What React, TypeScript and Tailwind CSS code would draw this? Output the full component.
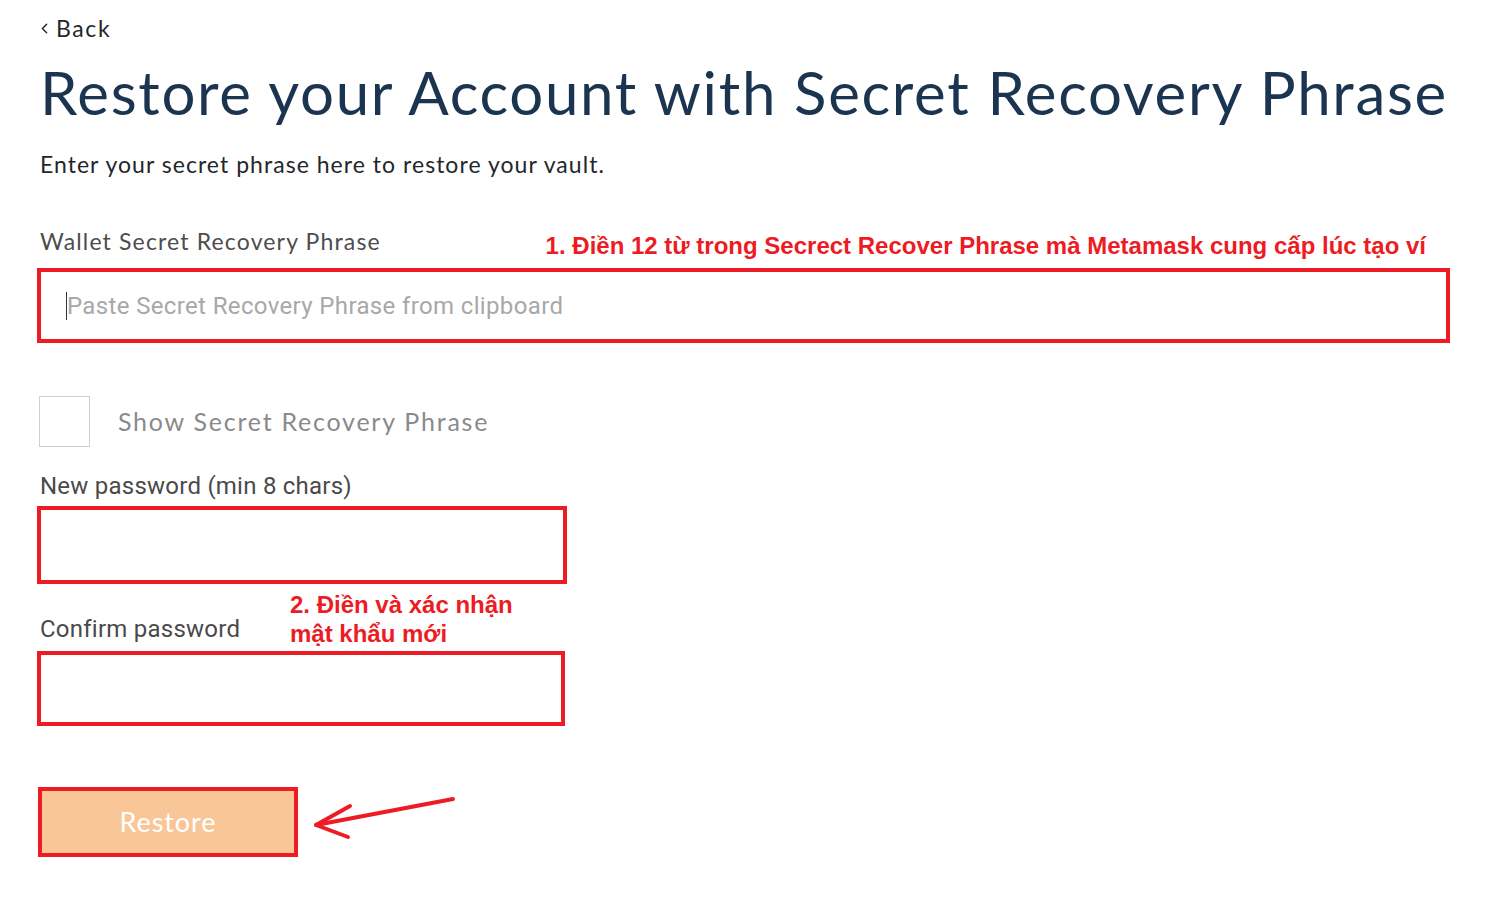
import { ChevronLeft } from 'lucide-react'

const euclid = { fontFamily: 'Lato, "Noto Sans", sans-serif' }

function RedArrow() {
  return (
    <svg width="170" height="60" viewBox="0 0 170 60">
      <g stroke="#ed1c24" strokeWidth="4" strokeLinecap="round" strokeLinejoin="round" fill="none">
        <line x1="155" y1="12" x2="18" y2="38" />
        <polyline points="52,19 18,38 50,50" />
      </g>
    </svg>
  )
}

export default function App() {
  return (
    <div className="min-h-[900px] w-[1507px] bg-white px-10 pt-[14px] text-[#24272a]" style={euclid}>
      {/* Back */}
      <div className="flex items-center gap-[3px] font-['Lato'] text-[23px] leading-[28px] tracking-[0.07em] text-[#24272a]">
        <ChevronLeft size={17} strokeWidth={2} className="-ml-[4px]" />
        <span>Back</span>
      </div>

      {/* Title */}
      <h1 className="mt-[16px] whitespace-nowrap font-['Lato'] text-[60px] leading-[68px] tracking-[0.028em] text-[#1b3550]">
        Restore your Account with Secret Recovery Phrase
      </h1>

      <p className="mt-[23px] font-['Lato'] text-[23px] leading-[30px] tracking-[0.045em] text-[#24272a]">
        Enter your secret phrase here to restore your vault.
      </p>

      {/* Seed phrase */}
      <div className="mt-[47px] flex items-end justify-between pr-[41px]">
        <span className="font-['Lato'] text-[23px] leading-[30px] tracking-[0.05em] text-[#4d4d4d]">
          Wallet Secret Recovery Phrase
        </span>
        <span className="translate-y-[5px] font-['Liberation_Sans'] text-[24px] font-bold leading-[30px] text-[#ed1c24]">
          1. Điền 12 từ trong Secrect Recover Phrase mà Metamask cung cấp lúc tạo ví
        </span>
      </div>
      <div className="-ml-[3px] mt-[12px] flex h-[75px] w-[1413px] items-center border-4 border-[#ed1c24] pl-[25px]">
        <div className="h-[28px] w-px bg-[#333]" />
        <span className="font-['Roboto'] text-[24px] tracking-[0.015em] text-[#a8a8a8]">
          Paste Secret Recovery Phrase from clipboard
        </span>
      </div>

      {/* Show phrase */}
      <div className="mt-[53px] flex items-center gap-[28px]">
        <div className="-ml-[1px] h-[51px] w-[51px] border border-[#cfcfcf] bg-white" />
        <span className="font-['Lato'] text-[25px] tracking-[0.07em] text-[#8a8a8a]">Show Secret Recovery Phrase</span>
      </div>

      {/* New password */}
      <div className="mt-[24px] font-['Roboto'] text-[24px] leading-[30px] tracking-[0.01em] text-[#4a4a4a]">
        New password (min 8 chars)
      </div>
      <div className="-ml-[3px] mt-[5px] h-[78px] w-[530px] border-4 border-[#ed1c24]" />

      {/* Confirm password */}
      <div className="flex items-end">
        <span className="w-[250px] pb-[4px] font-['Roboto'] text-[24px] leading-[30px] tracking-[0.01em] text-[#4a4a4a]">
          Confirm password
        </span>
        <span className="mt-[6px] font-['Liberation_Sans'] text-[24px] font-bold leading-[29px] text-[#ed1c24]">
          2. Điền và xác nhận
          <br />
          mật khẩu mới
        </span>
      </div>
      <div className="-ml-[3px] mt-[3px] h-[75px] w-[528px] border-4 border-[#ed1c24]" />

      {/* Restore */}
      <div className="mt-[61px] flex items-start">
        <div className="-ml-[2px] flex h-[70px] w-[260px] items-center justify-center border-4 border-[#ed1c24] bg-[#f9c797]">
          <span className="font-['Lato'] text-[27px] tracking-[0.035em] text-white">Restore</span>
        </div>
        <RedArrow />
      </div>
    </div>
  )
}
